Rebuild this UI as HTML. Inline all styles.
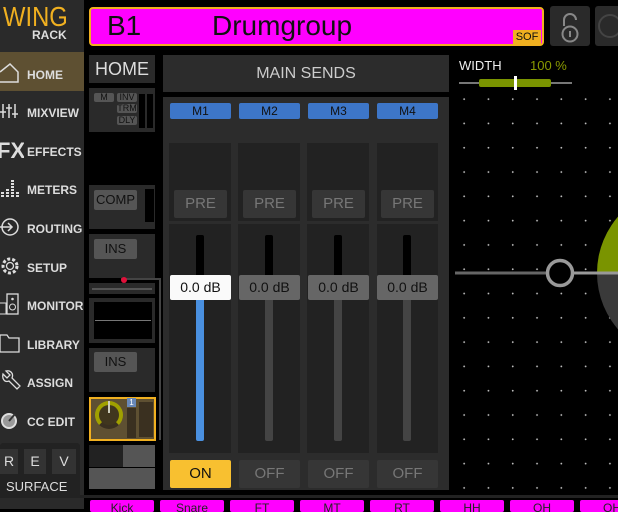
<!DOCTYPE html>
<html><head><meta charset="utf-8"><style>
*{margin:0;padding:0;box-sizing:border-box}
body{width:618px;height:509px;background:#000;position:relative;overflow:hidden;font-family:"Liberation Sans",sans-serif}
.a{position:absolute}
.nav{position:absolute;left:0;width:84px;height:38px;color:#ddd;font-weight:bold;font-size:12px}
.nav span{position:absolute;left:27px;top:14px}
.nav svg{position:absolute;left:0;top:8px}
.btn{position:absolute;background:#555;color:#111;font-size:13px;text-align:center;border-radius:2px}
.lbl{position:absolute;top:103px;height:16px;width:61px;background:#3d76c8;border-radius:2px;color:#111;font-size:12px;text-align:center;line-height:16px}
.tag{position:absolute;top:500px;height:12px;width:64px;background:#f0f;border-radius:2px;color:#222;font-size:12px;text-align:center;line-height:16px;overflow:hidden}
</style></head><body>
<div class="a" style="left:0;top:0;width:84px;height:509px;background:#2a2a2a"></div>
<div class="a" style="left:3px;top:3px;font-size:28px;color:#f0b020;line-height:28px;transform:scaleX(.85);transform-origin:left">WING</div>
<div class="a" style="left:32px;top:28px;font-size:12px;color:#ddd;font-weight:bold">RACK</div>
<div class="a" style="left:0;top:52px;width:84px;height:39px;background:#5e5032"></div>
<div class="nav" style="top:54px"><svg width="22" height="22"><path d="M0 10 L10 2 L18 10 L18 20 L0 20" fill="none" stroke="#ddd" stroke-width="1.5"/></svg><span>HOME</span></div>
<div class="nav" style="top:92px"><svg width="22" height="22"><path d="M3 4V18M9 4V18M15 4V18M0 12H6M6 8H12M12 14H18" stroke="#ddd" stroke-width="1.5"/></svg><span>MIXVIEW</span></div>
<div class="nav" style="top:131px"><svg width="24" height="22"><text x="-3" y="19" font-size="22" fill="#ddd" font-family="Liberation Sans">FX</text></svg><span>EFFECTS</span></div>
<div class="nav" style="top:169px"><svg width="22" height="22"><path d="M1 16h3M1 19h3M6 13h3M6 16h3M6 19h3M11 4h3M11 7h3M11 10h3M11 13h3M11 16h3M11 19h3M16 16h3M16 19h3" stroke="#ddd" stroke-width="2"/></svg><span>METERS</span></div>
<div class="nav" style="top:208px"><svg width="22" height="22"><circle cx="10" cy="11" r="8" fill="none" stroke="#ddd" stroke-width="1.5"/><path d="M0 11H12M8 7l4 4-4 4" fill="none" stroke="#ddd" stroke-width="1.5"/></svg><span>ROUTING</span></div>
<div class="nav" style="top:247px"><svg width="22" height="22"><circle cx="10" cy="11" r="7" fill="none" stroke="#ddd" stroke-width="3" stroke-dasharray="3 2"/><circle cx="10" cy="11" r="3.5" fill="none" stroke="#ddd" stroke-width="1.3"/></svg><span>SETUP</span></div>
<div class="nav" style="top:285px"><svg width="22" height="22"><rect x="7" y="1" width="11" height="20" fill="none" stroke="#ddd" stroke-width="1.3"/><circle cx="12.5" cy="14" r="3" fill="none" stroke="#ddd"/><circle cx="12.5" cy="6" r="1.3" fill="#ddd"/><path d="M0 10h6v11H0" fill="none" stroke="#ddd"/></svg><span>MONITOR</span></div>
<div class="nav" style="top:324px"><svg width="22" height="22"><path d="M0 3h7l2 3h10v14H0z" fill="none" stroke="#ddd" stroke-width="1.3"/></svg><span>LIBRARY</span></div>
<div class="nav" style="top:362px"><svg width="22" height="22"><path d="M3 4l4 4 3-3-4-4c4-1 8 2 6 7l8 8-3 3-8-8c-5 2-7-3-6-7z" fill="none" stroke="#ddd" stroke-width="1.3"/></svg><span>ASSIGN</span></div>
<div class="nav" style="top:401px"><svg width="22" height="22"><circle cx="9" cy="12" r="8" fill="#ddd"/><circle cx="9" cy="12" r="6" fill="#999"/><path d="M9 12L15 5" stroke="#333" stroke-width="2"/></svg><span>CC EDIT</span></div>
<div class="a" style="left:0;top:443px;width:80px;height:54px;background:#222;border-radius:3px"></div>
<div class="a" style="left:0;top:449px;width:18px;height:25px;background:#333;color:#ddd;font-size:14px;text-align:center;line-height:25px">R</div>
<div class="a" style="left:24px;top:449px;width:22px;height:25px;background:#333;color:#ddd;font-size:14px;text-align:center;line-height:25px">E</div>
<div class="a" style="left:52px;top:449px;width:24px;height:25px;background:#333;color:#ddd;font-size:14px;text-align:center;line-height:25px">V</div>
<div class="a" style="left:6px;top:479px;color:#ddd;font-size:13px">SURFACE</div>
<div class="a" style="left:89px;top:7px;width:455px;height:39px;background:#f0f;border:2px solid #f0b020;border-radius:4px"></div>
<div class="a" style="left:107px;top:10px;font-size:28px;color:#111">B1</div>
<div class="a" style="left:212px;top:10px;font-size:28px;color:#111">Drumgroup</div>
<div class="a" style="left:513px;top:30px;width:28px;height:14px;background:#f0b020;font-size:11px;color:#111;line-height:15px;text-align:center">SOF</div>
<div class="a" style="left:550px;top:6px;width:40px;height:40px;background:#2a2a2a;border-radius:3px"></div>
<svg class="a" style="left:555px;top:8px" width="30" height="36"><path d="M9 18V12a6 6 0 0 1 12 0" fill="none" stroke="#888" stroke-width="2"/><circle cx="15" cy="26" r="7.5" fill="none" stroke="#888" stroke-width="2"/><rect x="14" y="23" width="2" height="6" fill="#888"/></svg>
<div class="a" style="left:595px;top:6px;width:30px;height:40px;background:#2a2a2a;border-radius:3px"></div>
<div class="a" style="left:598px;top:14px;width:24px;height:24px;border:2px solid #444;border-radius:50%"></div>
<div class="a" style="left:89px;top:55px;width:66px;height:28px;background:#2a2a2a;color:#ddd;font-size:18px;text-align:center;line-height:28px">HOME</div>
<div class="a" style="left:89px;top:88px;width:66px;height:44px;background:#2a2a2a"></div>
<div class="btn" style="left:94px;top:93px;width:20px;height:9px;font-size:9px;line-height:9px">M</div>
<div class="btn" style="left:117px;top:93px;width:20px;height:9px;font-size:9px;line-height:9px">INV</div>
<div class="btn" style="left:117px;top:104px;width:20px;height:9px;font-size:9px;line-height:9px">TRM</div>
<div class="btn" style="left:117px;top:116px;width:20px;height:9px;font-size:9px;line-height:9px">DLY</div>
<div class="a" style="left:139px;top:94px;width:6px;height:34px;background:#000"></div>
<div class="a" style="left:147px;top:94px;width:6px;height:34px;background:#000"></div>
<div class="a" style="left:89px;top:185px;width:66px;height:44px;background:#2a2a2a"></div>
<div class="btn" style="left:94px;top:190px;width:43px;height:20px;line-height:20px">COMP</div>
<div class="a" style="left:145px;top:189px;width:9px;height:33px;background:#000"></div>
<div class="a" style="left:89px;top:234px;width:66px;height:44px;background:#2a2a2a"></div>
<div class="btn" style="left:94px;top:239px;width:43px;height:20px;line-height:20px">INS</div>
<div class="a" style="left:121px;top:278px;width:40px;height:2px;background:#444"></div>
<div class="a" style="left:159px;top:278px;width:2px;height:162px;background:#444"></div>
<div class="a" style="left:121px;top:277px;width:6px;height:6px;border-radius:50%;background:#e0103a"></div>
<div class="a" style="left:89px;top:283px;width:66px;height:11px;background:#2a2a2a"></div>
<div class="a" style="left:92px;top:288px;width:60px;height:2px;background:#555"></div>
<div class="a" style="left:89px;top:298px;width:66px;height:45px;background:#2a2a2a"></div>
<div class="a" style="left:94px;top:302px;width:58px;height:37px;background:#000"></div>
<div class="a" style="left:95px;top:320px;width:56px;height:1px;background:#777"></div>
<div class="a" style="left:89px;top:348px;width:66px;height:44px;background:#2a2a2a"></div>
<div class="btn" style="left:94px;top:352px;width:43px;height:20px;line-height:20px">INS</div>
<div class="a" style="left:89px;top:397px;width:67px;height:44px;background:#5e5032;border:2px solid #f0b020"></div>
<div class="a" style="left:95px;top:401px;width:28px;height:28px;border-radius:50%;border:4px solid #a0a000;border-bottom-color:#3a3020;background:#40361e"></div>
<div class="a" style="left:108px;top:401px;width:2px;height:12px;background:#ccb"></div>
<div class="a" style="left:127px;top:398px;width:9px;height:9px;background:#6888b8;color:#fff;font-size:8px;text-align:center;line-height:9px">1</div>
<div class="a" style="left:127px;top:408px;width:9px;height:30px;background:#3a3020"></div>
<div class="a" style="left:139px;top:402px;width:14px;height:35px;background:#3a3020"></div>
<div class="a" style="left:89px;top:445px;width:66px;height:22px;background:#222"></div>
<div class="a" style="left:123px;top:445px;width:32px;height:22px;background:#555"></div>
<div class="a" style="left:89px;top:468px;width:66px;height:21px;background:#555"></div>
<div class="a" style="left:163px;top:55px;width:286px;height:37px;background:#2c2c2c;color:#ccc;font-size:16px;text-align:center;line-height:37px">MAIN SENDS</div>
<div class="a" style="left:163px;top:97px;width:286px;height:393px;background:#2c2c2c"></div>
<div class="lbl" style="left:170px">M1</div><div class="lbl" style="left:239px">M2</div><div class="lbl" style="left:308px">M3</div><div class="lbl" style="left:377px">M4</div>
<div class="a" style="left:169px;top:143px;width:62px;height:78px;background:#222"></div>
<div class="a" style="left:238px;top:143px;width:62px;height:78px;background:#222"></div>
<div class="a" style="left:307px;top:143px;width:62px;height:78px;background:#222"></div>
<div class="a" style="left:377px;top:143px;width:61px;height:78px;background:#222"></div>
<div class="a" style="left:174px;top:190px;width:53px;height:28px;background:#363636;color:#777;font-size:15px;text-align:center;line-height:28px;border-radius:2px">PRE</div>
<div class="a" style="left:243px;top:190px;width:53px;height:28px;background:#363636;color:#777;font-size:15px;text-align:center;line-height:28px;border-radius:2px">PRE</div>
<div class="a" style="left:312px;top:190px;width:53px;height:28px;background:#363636;color:#777;font-size:15px;text-align:center;line-height:28px;border-radius:2px">PRE</div>
<div class="a" style="left:381px;top:190px;width:53px;height:28px;background:#363636;color:#777;font-size:15px;text-align:center;line-height:28px;border-radius:2px">PRE</div>
<div class="a" style="left:169px;top:224px;width:62px;height:229px;background:#222"></div>
<div class="a" style="left:238px;top:224px;width:62px;height:229px;background:#222"></div>
<div class="a" style="left:307px;top:224px;width:62px;height:229px;background:#222"></div>
<div class="a" style="left:377px;top:224px;width:61px;height:229px;background:#222"></div>
<div class="a" style="left:196px;top:235px;width:8px;height:45px;background:#000;border-radius:2px"></div>
<div class="a" style="left:265px;top:235px;width:8px;height:45px;background:#000;border-radius:2px"></div>
<div class="a" style="left:334px;top:235px;width:8px;height:45px;background:#000;border-radius:2px"></div>
<div class="a" style="left:403px;top:235px;width:8px;height:45px;background:#000;border-radius:2px"></div>
<div class="a" style="left:196px;top:295px;width:8px;height:146px;background:#4a90e0;border-radius:2px"></div>
<div class="a" style="left:265px;top:295px;width:8px;height:146px;background:#444;border-radius:2px"></div>
<div class="a" style="left:334px;top:295px;width:8px;height:146px;background:#444;border-radius:2px"></div>
<div class="a" style="left:403px;top:295px;width:8px;height:146px;background:#444;border-radius:2px"></div>
<div class="a" style="left:170px;top:275px;width:61px;height:25px;background:#fafafa;color:#111;font-size:14px;text-align:center;line-height:25px;border-radius:2px">0.0 dB</div>
<div class="a" style="left:239px;top:275px;width:61px;height:25px;background:#666;color:#111;font-size:14px;text-align:center;line-height:25px;border-radius:2px">0.0 dB</div>
<div class="a" style="left:308px;top:275px;width:61px;height:25px;background:#666;color:#111;font-size:14px;text-align:center;line-height:25px;border-radius:2px">0.0 dB</div>
<div class="a" style="left:377px;top:275px;width:61px;height:25px;background:#666;color:#111;font-size:14px;text-align:center;line-height:25px;border-radius:2px">0.0 dB</div>
<div class="a" style="left:170px;top:460px;width:61px;height:28px;background:#f8c030;color:#111;font-size:15px;text-align:center;line-height:28px;border-radius:2px">ON</div>
<div class="a" style="left:239px;top:460px;width:61px;height:28px;background:#363636;color:#777;font-size:15px;text-align:center;line-height:28px;border-radius:2px">OFF</div>
<div class="a" style="left:308px;top:460px;width:61px;height:28px;background:#363636;color:#777;font-size:15px;text-align:center;line-height:28px;border-radius:2px">OFF</div>
<div class="a" style="left:377px;top:460px;width:61px;height:28px;background:#363636;color:#777;font-size:15px;text-align:center;line-height:28px;border-radius:2px">OFF</div>
<div class="a" style="left:455px;top:90px;width:163px;height:405px;background-image:radial-gradient(circle,#bbb 0.8px,transparent 1.1px);background-size:24.3px 24.3px;background-position:-3px -3px"></div>
<div class="a" style="left:459px;top:58px;color:#eee;font-size:13px">WIDTH</div>
<div class="a" style="left:530px;top:58px;color:#8a9a00;font-size:13px">100 %</div>
<div class="a" style="left:459px;top:82px;width:113px;height:2px;background:#777"></div>
<div class="a" style="left:479px;top:79px;width:72px;height:8px;background:#7a9400;border-radius:2px"></div>
<div class="a" style="left:514px;top:76px;width:3px;height:14px;background:#fff"></div>
<svg class="a" style="left:455px;top:180px" width="163" height="190"><path d="M142 93A86 86 0 0 1 228 7V93z" fill="#7a9400"/><path d="M142 93A86 86 0 0 0 228 179V93z" fill="#3a3a3a"/><path d="M0 93H105" stroke="#666" stroke-width="3"/><path d="M105 93H163" stroke="#999" stroke-width="3"/><circle cx="105" cy="93" r="12.5" fill="#000" stroke="#999" stroke-width="3.5"/></svg>
<div class="a" style="left:0;top:495px;width:618px;height:3px;background:#222"></div>
<div class="tag" style="left:90px">Kick</div><div class="tag" style="left:160px">Snare</div><div class="tag" style="left:230px">FT</div><div class="tag" style="left:300px">MT</div><div class="tag" style="left:370px">RT</div><div class="tag" style="left:440px">HH</div><div class="tag" style="left:510px">OH</div><div class="tag" style="left:580px">OH</div>
</body></html>
